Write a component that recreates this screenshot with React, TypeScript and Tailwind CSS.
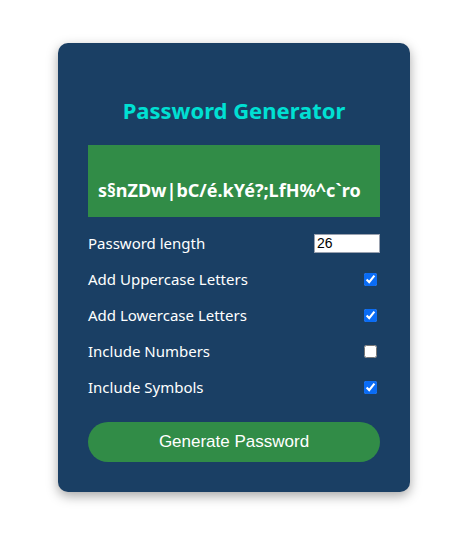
import { useState } from 'react'

const options = [
  { key: 'upper', label: 'Add Uppercase Letters' },
  { key: 'lower', label: 'Add Lowercase Letters' },
  { key: 'numbers', label: 'Include Numbers' },
  { key: 'symbols', label: 'Include Symbols' },
] as const

export default function App() {
  const [length, setLength] = useState('26')
  const [checked, setChecked] = useState<Record<string, boolean>>({
    upper: true,
    lower: true,
    numbers: false,
    symbols: true,
  })
  const password = 's§nZDw|bC/é.kYé?;LfH%^c`ro'

  return (
    <div className="min-h-[541px] bg-white pt-[43px] pl-[58px]" style={{ fontFamily: '"Noto Sans", "Open Sans", sans-serif' }}>
      <div className="w-[352px] h-[449px] rounded-[10px] bg-[#1a3f64] px-[30px] pt-[52px] shadow-[0_4px_12px_rgba(0,0,0,0.35)]">
        <h2 className="text-center text-[22px] font-bold leading-[30px] text-[#00e0d3]">Password Generator</h2>

        <div className="mt-[20px] h-[72px] bg-[#318c47] px-[10px] pt-[33px]">
          <h3 className="text-[18px] font-bold leading-[24px] text-white whitespace-nowrap">{password}</h3>
        </div>

        <div className="mt-[16px] flex h-[20px] items-center justify-between text-[15px] text-white">
          <label>Password length</label>
          <input
            type="number"
            value={length}
            onChange={(e) => setLength(e.target.value)}
            className="h-[19px] w-[66px] border border-gray-400 bg-white px-[2px] text-[14px] leading-none text-black"
            style={{ fontFamily: 'Arial, "Liberation Sans", sans-serif' }}
          />
        </div>

        {options.map((o) => (
          <div key={o.key} className="mt-[16px] flex h-[20px] items-center justify-between text-[15px] text-white">
            <label>{o.label}</label>
            <input
              type="checkbox"
              checked={checked[o.key]}
              onChange={() => setChecked({ ...checked, [o.key]: !checked[o.key] })}
              className="mr-[3px] h-[13px] w-[13px] accent-[#0a6cf5]"
            />
          </div>
        ))}

        <button
          className="mt-[25px] h-[40px] w-full rounded-full bg-[#318c47] text-[17px] text-white"
          style={{ fontFamily: 'Arial, "Liberation Sans", sans-serif' }}
        >
          Generate Password
        </button>
      </div>
    </div>
  )
}
